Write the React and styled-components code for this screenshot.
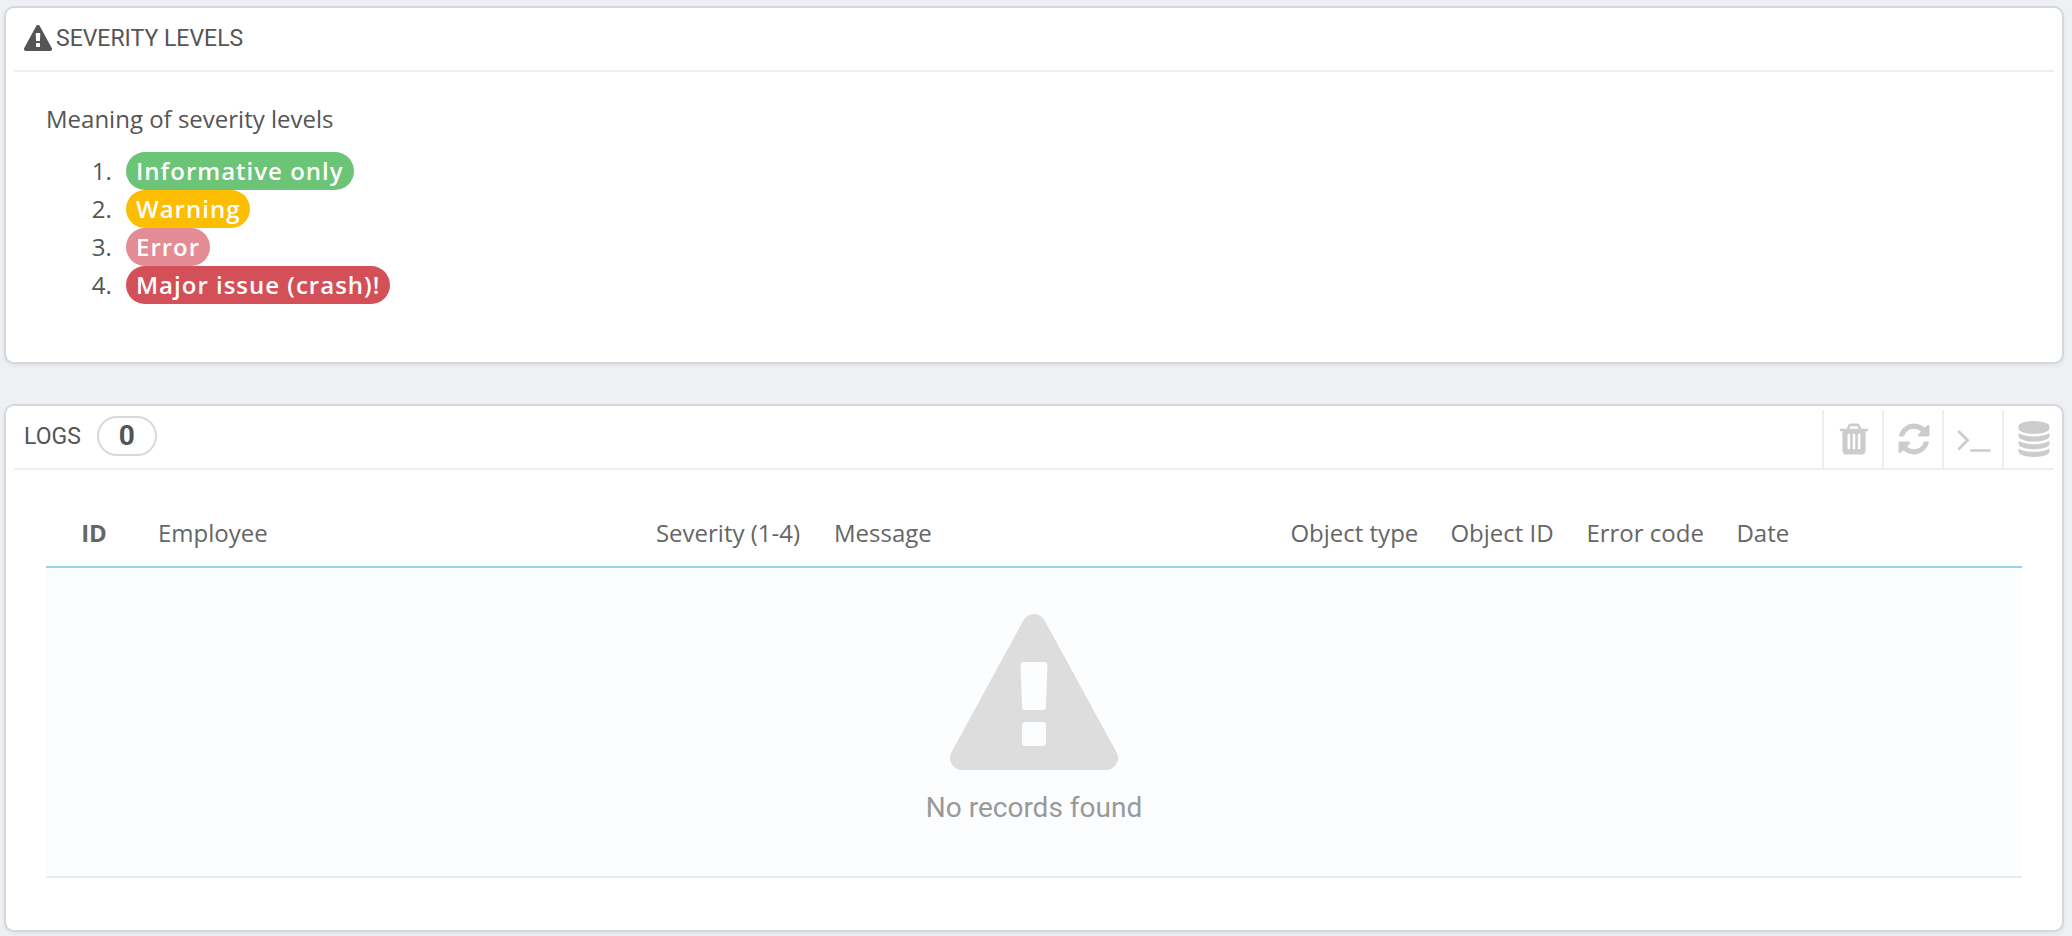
import React from 'react';
import styled, { createGlobalStyle } from 'styled-components';

const levels = [
  { text: 'Informative only', color: '#6cc477' },
  { text: 'Warning', color: '#fdbd00' },
  { text: 'Error', color: '#e48c93' },
  { text: 'Major issue (crash)!', color: '#d35059' },
];

const columns = [
  { text: 'ID', width: '96px', center: true },
  { text: 'Employee', width: '25.2%' },
  { text: 'Severity (1-4)', width: '178px' },
  { text: 'Message', width: '23.1%' },
  { text: 'Object type', width: '160px' },
  { text: 'Object ID', width: '136px' },
  { text: 'Error code', width: '150px' },
  { text: 'Date' },
];

const actions = [
  {
    label: 'Erase all',
    path: 'M704 1376v-704q0-14-9-23t-23-9h-64q-14 0-23 9t-9 23v704q0 14 9 23t23 9h64q14 0 23-9t9-23zm256 0v-704q0-14-9-23t-23-9h-64q-14 0-23 9t-9 23v704q0 14 9 23t23 9h64q14 0 23-9t9-23zm256 0v-704q0-14-9-23t-23-9h-64q-14 0-23 9t-9 23v704q0 14 9 23t23 9h64q14 0 23-9t9-23zm-544-992h448l-48-117q-7-9-17-11h-317q-10 2-17 11zm928 32v64q0 14-9 23t-23 9h-96v948q0 83-47 143.5t-113 60.5h-832q-66 0-113-58.5t-47-141.5v-952h-96q-14 0-23-9t-9-23v-64q0-14 9-23t23-9h309l70-167q15-37 54-63t79-26h320q40 0 79 26t54 63l70 167h309q14 0 23 9t9 23z',
  },
  {
    label: 'Refresh list',
    path: 'M1639 1056q0 5-1 7-64 268-268 434.5t-478 166.5q-146 0-282.5-55t-243.5-157l-129 129q-19 19-45 19t-45-19-19-45v-448q0-26 19-45t45-19h448q26 0 45 19t19 45-19 45l-137 137q71 66 161 102t187 36q134 0 250-65t186-179q11-17 53-117 8-23 30-23h192q13 0 22.5 9.5t9.5 22.5zm25-800v448q0 26-19 45t-45 19h-448q-26 0-45-19t-19-45 19-45l138-138q-148-137-349-137-134 0-250 65t-186 179q-11 17-53 117-8 23-30 23h-199q-13 0-22.5-9.5t-9.5-22.5v-7q65-268 270-434.5t480-166.5q146 0 284 55.5t245 156.5l130-129q19-19 45-19t45 19 19 45z',
  },
  {
    label: 'Show SQL query',
    path: 'M649 983l-466 466q-10 10-23 10t-23-10l-50-50q-10-10-10-23t10-23l393-393-393-393q-10-10-10-23t10-23l50-50q10-10 23-10t23 10l466 466q10 10 10 23t-10 23zm1079 457v64q0 14-9 23t-23 9h-960q-14 0-23-9t-9-23v-64q0-14 9-23t23-9h960q14 0 23 9t9 23z',
  },
  {
    label: 'Export to SQL Manager',
    path: 'M896 768q237 0 443-43t325-127v170q0 69-103 128t-280 93.5-385 34.5-385-34.5-280-93.5-103-128v-170q119 84 325 127t443 43zm0 768q237 0 443-43t325-127v170q0 69-103 128t-280 93.5-385 34.5-385-34.5-280-93.5-103-128v-170q119 84 325 127t443 43zm0-384q237 0 443-43t325-127v170q0 69-103 128t-280 93.5-385 34.5-385-34.5-280-93.5-103-128v-170q119 84 325 127t443 43zm0-1152q208 0 385 34.5t280 93.5 103 128v128q0 69-103 128t-280 93.5-385 34.5-385-34.5-280-93.5-103-128v-128q0-69 103-128t280-93.5 385-34.5z',
  },
];

function WarningIcon({ width, height }) {
  return (
    <svg
      width={width}
      height={height}
      viewBox='0 0 1792 1664'
      fill='currentColor'
      aria-hidden='true'
    >
      <path d='M1024 1375v-190q0-14-9.5-23.5t-22.5-9.5h-192q-13 0-22.5 9.5t-9.5 23.5v190q0 14 9.5 23.5t22.5 9.5h192q13 0 22.5-9.5t9.5-23.5zm-2-374l18-459q0-12-10-19-13-11-24-11h-220q-11 0-24 11-10 7-10 21l17 457q0 10 10 16.5t24 6.5h185q14 0 23.5-6.5t10.5-16.5zm-14-934l768 1408q35 63-2 126-17 29-46.5 46t-63.5 17h-1536q-34 0-63.5-17t-46.5-46q-37-63-2-126l768-1408q17-31 47-49t65-18 65 18 47 49z' />
    </svg>
  );
}

function SeverityPanel() {
  return (
    <Panel>
      <PanelHeader>
        <WarningIcon width={28} height={26} />
        <Title>SEVERITY LEVELS</Title>
      </PanelHeader>
      <SeverityBody>
        <p>Meaning of severity levels</p>
        <ol>
          {levels.map((level) => (
            <li key={level.text}>
              <Badge $color={level.color}>{level.text}</Badge>
            </li>
          ))}
        </ol>
      </SeverityBody>
    </Panel>
  );
}

function LogsPanel() {
  return (
    <Panel>
      <PanelHeader>
        <Title>LOGS</Title>
        <Count>0</Count>
        <Toolbar>
          {actions.map((action) => (
            <ToolButton
              key={action.label}
              type='button'
              aria-label={action.label}
            >
              <svg width='36' height='36' viewBox='0 0 1792 1792'>
                <path d={action.path} />
              </svg>
            </ToolButton>
          ))}
        </Toolbar>
      </PanelHeader>
      <LogsBody>
        <Table>
          <thead>
            <tr>
              {columns.map((column) => (
                <HeadCell
                  key={column.text}
                  scope='col'
                  $width={column.width}
                  $center={column.center}
                >
                  {column.text}
                </HeadCell>
              ))}
            </tr>
          </thead>
          <tbody>
            <tr>
              <EmptyCell colSpan={columns.length}>
                <Empty>
                  <WarningIcon width={168} height={156} />
                  <p>No records found</p>
                </Empty>
              </EmptyCell>
            </tr>
          </tbody>
        </Table>
      </LogsBody>
    </Panel>
  );
}

function App() {
  return (
    <>
      <GlobalStyle />
      <Page>
        <SeverityPanel />
        <LogsPanel />
      </Page>
    </>
  );
}

export default App;

const GlobalStyle = createGlobalStyle`
  * {
    box-sizing: border-box;
  }
  body {
    margin: 0;
    background-color: #eff0f3;
    color: #555;
    font-family: 'Open Sans', sans-serif;
    font-size: 24px;
    line-height: 38px;
  }
  p, h3, ol {
    margin: 0;
  }
`;

const Page = styled.main`
  display: flex;
  flex-direction: column;
  gap: 40px;
  padding: 6px 8px 4px 4px;
`;

const Panel = styled.section`
  border: 2px solid #d3d8db;
  border-radius: 10px;
  background-color: #fff;
  box-shadow: 0 2px 4px rgba(0, 0, 0, 0.06);
`;

const PanelHeader = styled.header`
  display: flex;
  align-items: center;
  gap: 4px;
  height: 64px;
  margin: 0 8px;
  padding: 0 0 2px 10px;
  border-bottom: 2px solid #eee;
`;

const Title = styled.h3`
  padding-top: 2px;
  font-family: 'Ubuntu Condensed', Roboto, sans-serif;
  font-size: 23px;
  font-weight: 400;
`;

const Count = styled.span`
  width: 60px;
  height: 40px;
  margin-left: 12px;
  border: 2px solid #d9d9d9;
  border-radius: 20px;
  font-family: 'Ubuntu Condensed', Roboto, sans-serif;
  font-size: 28px;
  font-weight: 700;
  line-height: 36px;
  text-align: center;
`;

/* reaches the panel edge, past the end of the header line */
const Toolbar = styled.div`
  display: flex;
  align-self: flex-end;
  height: 58px;
  margin: 0 -8px -2px auto;
`;

const ToolButton = styled.button`
  display: flex;
  align-items: center;
  justify-content: center;
  width: 60px;
  padding: 0 0 0 2px;
  border: 0;
  border-left: 2px solid #eee;
  background: none;
  cursor: pointer;
  svg {
    fill: #ccc;
  }
`;

const SeverityBody = styled.div`
  padding: 28px 40px 58px;
  p {
    margin-bottom: 14px;
  }
  ol {
    padding-left: 72px;
  }
  li {
    padding-left: 8px;
  }
`;

const Badge = styled.span`
  display: inline-block;
  padding: 0 10px;
  border-radius: 19px;
  background-color: ${({ $color }) => $color};
  color: #fff;
  font-weight: 600;
  letter-spacing: 1px;
  vertical-align: top;
`;

const LogsBody = styled.div`
  padding: 36px 40px 52px;
`;

const Table = styled.table`
  width: 100%;
  table-layout: fixed;
  border-collapse: separate;
  border-spacing: 0;
`;

const HeadCell = styled.th`
  width: ${({ $width }) => $width || 'auto'};
  padding: 8px 16px 14px;
  border-bottom: 2px solid #9bd0ea;
  color: #666;
  font-weight: ${({ $center }) => ($center ? 700 : 400)};
  text-align: ${({ $center }) => ($center ? 'center' : 'left')};
  white-space: nowrap;
`;

const EmptyCell = styled.td`
  padding: 46px 16px;
  border-bottom: 2px solid #e9ebec;
  background-color: #fcfdff;
`;

const Empty = styled.div`
  display: flex;
  flex-direction: column;
  align-items: center;
  gap: 16px;
  color: #ddd;
  p {
    color: #999;
    font-family: 'Ubuntu Condensed', Roboto, sans-serif;
    font-size: 28px;
    font-weight: 400;
    line-height: 44px;
  }
`;
